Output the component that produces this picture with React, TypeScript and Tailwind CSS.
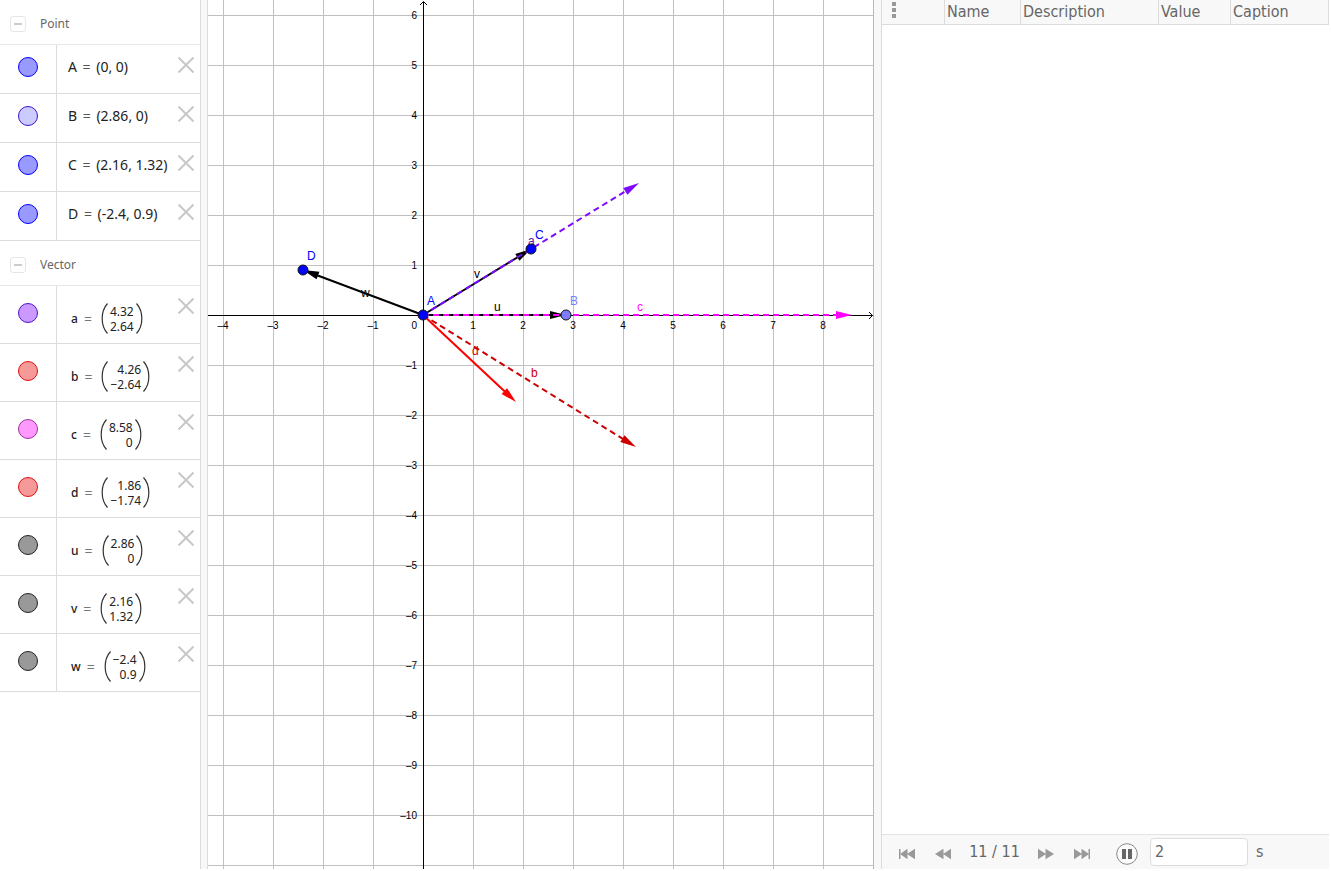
import type { ReactNode } from "react";

type PointItem = { name: string; value: string; fill: string; stroke: string };
type VectorItem = { name: string; top: string; bottom: string; fill: string; stroke: string };

const POINTS: PointItem[] = [
	{ name: "A", value: "(0, 0)", fill: "#9999ff", stroke: "#0000ff" },
	{ name: "B", value: "(2.86, 0)", fill: "#cbcbff", stroke: "#3a12cc" },
	{ name: "C", value: "(2.16, 1.32)", fill: "#9999ff", stroke: "#0000ff" },
	{ name: "D", value: "(-2.4, 0.9)", fill: "#9999ff", stroke: "#0000ff" },
];

const VECTORS: VectorItem[] = [
	{ name: "a", top: "4.32", bottom: "2.64", fill: "#cb99ff", stroke: "#4a18c8" },
	{ name: "b", top: "4.26", bottom: "−2.64", fill: "#f59999", stroke: "#dd1111" },
	{ name: "c", top: "8.58", bottom: "0", fill: "#ff99ff", stroke: "#99339f" },
	{ name: "d", top: "1.86", bottom: "−1.74", fill: "#f59999", stroke: "#dd1111" },
	{ name: "u", top: "2.86", bottom: "0", fill: "#999999", stroke: "#222222" },
	{ name: "v", top: "2.16", bottom: "1.32", fill: "#999999", stroke: "#222222" },
	{ name: "w", top: "−2.4", bottom: "0.9", fill: "#999999", stroke: "#222222" },
];

// graphics view: origin and scale in px
const ORIGIN_X = 215;
const ORIGIN_Y = 315;
const UNIT = 50;

const X_TICKS = [-4, -3, -2, -1, 1, 2, 3, 4, 5, 6, 7, 8];
const Y_TICKS = [6, 5, 4, 3, 2, 1, -1, -2, -3, -4, -5, -6, -7, -8, -9, -10];

const ARROWS = [
	{ id: "u", x: 2.86, y: 0, color: "#000000", dashed: false },
	{ id: "v", x: 2.16, y: 1.32, color: "#000000", dashed: false },
	{ id: "w", x: -2.4, y: 0.9, color: "#000000", dashed: false },
	{ id: "a", x: 4.32, y: 2.64, color: "#7d0aff", dashed: true },
	{ id: "b", x: 4.26, y: -2.64, color: "#cc0000", dashed: true },
	{ id: "c", x: 8.58, y: 0, color: "#ff00ff", dashed: true },
	{ id: "d", x: 1.86, y: -1.74, color: "#ff0000", dashed: false },
];

const DOTS = [
	{ id: "A", x: 0, y: 0, color: "#0000ff" },
	{ id: "B", x: 2.86, y: 0, color: "#7d7dff" },
	{ id: "C", x: 2.16, y: 1.32, color: "#0000ff" },
	{ id: "D", x: -2.4, y: 0.9, color: "#0000ff" },
];

const ARROW_LABELS = [
	{ text: "a", x: 105, y: -70, color: "#5a10a8" },
	{ text: "b", x: 108, y: 62, color: "#cc0000" },
	{ text: "c", x: 214, y: -4, color: "#ff00ff" },
	{ text: "d", x: 49, y: 40, color: "#cc0000" },
	{ text: "u", x: 71, y: -4, color: "#000000" },
	{ text: "v", x: 51, y: -37, color: "#000000" },
	{ text: "w", x: -62, y: -18, color: "#000000" },
];

function formatTick(n: number) {
	return n < 0 ? `–${-n}` : String(n);
}

function GroupHeader({ title }: { title: string }) {
	return (
		<div className="flex h-[45px] items-center gap-[14px] border-b border-[#e8e8e8] pt-1 pl-[10px]">
			<button
				type="button"
				aria-label={`Collapse ${title}`}
				className="flex h-4 w-4 items-center justify-center rounded-[3px] border border-[#e6e6e6]"
			>
				<span className="h-0.5 w-2 bg-[#cccccc]" />
			</button>
			<h2 className="font-['Noto_Sans',sans-serif] text-[12px] leading-4 text-[#666666]">{title}</h2>
		</div>
	);
}

function Marble({ name, fill, stroke }: { name: string; fill: string; stroke: string }) {
	return (
		<button type="button" aria-label={`Show or hide ${name}`} className="h-5 w-5">
			<svg width="20" height="20" viewBox="0 0 20 20">
				<circle cx="10" cy="10" r="9.5" fill={fill} stroke={stroke} />
			</svg>
		</button>
	);
}

function DeleteButton({ name }: { name: string }) {
	return (
		<button type="button" aria-label={`Delete ${name}`} className="mt-3 mr-[6px] h-4 w-4 shrink-0">
			<svg width="16" height="16" viewBox="0 0 16 16" stroke="#c8c8c8" strokeWidth="2">
				<path d="M.5 .5 15.5 15.5M15.5 .5 .5 15.5" />
			</svg>
		</button>
	);
}

function Row({ item, tall, children }: { item: PointItem | VectorItem; tall?: boolean; children: ReactNode }) {
	return (
		<li className={`flex border-b border-[#dcdcdc] ${tall ? "h-[58px]" : "h-[49px]"}`}>
			<div
				className={`flex w-[57px] shrink-0 justify-center border-r border-[#dcdcdc] ${tall ? "pt-[17px]" : "pt-3"}`}
			>
				<Marble name={item.name} fill={item.fill} stroke={item.stroke} />
			</div>
			<div className="min-w-0 flex-1">{children}</div>
			<DeleteButton name={item.name} />
		</li>
	);
}

function Paren({ right }: { right?: boolean }) {
	return (
		<svg width="7" height="31" viewBox="0 0 7 31" fill="none" stroke="#333333" strokeWidth="1.2">
			<path d={right ? "M.5 .5C7.6 8.5 7.6 22.5 .5 30.5" : "M6.5 .5C-.6 8.5 -.6 22.5 6.5 30.5"} />
		</svg>
	);
}

function AlgebraView() {
	return (
		<aside className="w-[201px] shrink-0 overflow-hidden border-r border-[#dcdcdc] bg-white">
			<GroupHeader title="Point" />
			<ul>
				{POINTS.map((p) => (
					<Row key={p.name} item={p}>
						<div className="pt-3 pl-[11px] font-['Noto_Sans',sans-serif] text-[14px] leading-5 whitespace-nowrap text-[#222222]">
							{p.name} <span className="mx-0.5 text-[#555555]">=</span> {p.value}
						</div>
					</Row>
				))}
			</ul>
			<GroupHeader title="Vector" />
			<ul>
				{VECTORS.map((v) => (
					<Row key={v.name} item={v} tall>
						<div className="flex items-center pt-[17px] pl-[14px] font-['Noto_Sans',sans-serif] text-[12px] text-[#222222]">
							<span className="font-medium">{v.name}</span>
							<span className="mr-[9px] ml-[6px] text-[14px] text-[#777777]">=</span>
							<Paren />
							<span className="mx-0.5 flex flex-col items-end leading-[15px]">
								<span>{v.top}</span>
								<span>{v.bottom}</span>
							</span>
							<Paren right />
						</div>
					</Row>
				))}
			</ul>
		</aside>
	);
}

function Arrow({ x, y, color, dashed }: { x: number; y: number; color: string; dashed: boolean }) {
	const px = x * UNIT;
	const py = -y * UNIT;
	const length = Math.hypot(px, py);
	const angle = (Math.atan2(py, px) * 180) / Math.PI;
	return (
		<g transform={`rotate(${angle})`}>
			<line x2={length - 15} stroke={color} strokeWidth="2" strokeDasharray={dashed ? "6 4" : undefined} />
			<path d={`M${length} 0l-16 -4v8z`} fill={color} />
		</g>
	);
}

function GraphicsView() {
	return (
		<main className="min-w-0 flex-1 overflow-hidden bg-white">
			<svg className="block h-full w-full font-['Liberation_Sans',Arial,sans-serif]" role="img" aria-label="Graphics view">
				<g stroke="#c0c0c0" shapeRendering="crispEdges">
					{X_TICKS.map((n) => (
						<line key={n} x1={ORIGIN_X + n * UNIT + 0.5} x2={ORIGIN_X + n * UNIT + 0.5} y1="0" y2="100%" />
					))}
					{[...Y_TICKS, -11].map((n) => (
						<line key={n} x1="0" x2="100%" y1={ORIGIN_Y - n * UNIT + 0.5} y2={ORIGIN_Y - n * UNIT + 0.5} />
					))}
				</g>

				{/* axes */}
				<g stroke="#000000" fill="none">
					<line x1="0" x2="100%" y1={ORIGIN_Y + 0.5} y2={ORIGIN_Y + 0.5} />
					<line x1={ORIGIN_X + 0.5} x2={ORIGIN_X + 0.5} y1="2" y2="100%" />
					<path d={`M${ORIGIN_X - 3} 5l3.5 -3.5l3.5 3.5`} />
					<svg x="100%" y={ORIGIN_Y} overflow="visible">
						<path d="M-4 -3l3.5 3.5l-3.5 3.5" />
					</svg>
				</g>

				<g transform={`translate(${ORIGIN_X} ${ORIGIN_Y})`}>
					<g fontSize="10" fill="#000000">
						{X_TICKS.map((n) => (
							<text key={n} x={n * UNIT} y="14" textAnchor="middle">
								{formatTick(n)}
							</text>
						))}
						{Y_TICKS.map((n) => (
							<text key={n} x="-6" y={-n * UNIT + 4} textAnchor="end">
								{formatTick(n)}
							</text>
						))}
						<text x="-6" y="14" textAnchor="end">
							0
						</text>
					</g>

					{ARROWS.map((a) => (
						<Arrow key={a.id} x={a.x} y={a.y} color={a.color} dashed={a.dashed} />
					))}
					<g fontSize="12">
						{ARROW_LABELS.map((l) => (
							<text key={l.text} x={l.x} y={l.y} fill={l.color}>
								{l.text}
							</text>
						))}
						{DOTS.map((d) => (
							<g key={d.id} transform={`translate(${d.x * UNIT} ${-d.y * UNIT})`}>
								<circle r="5" fill={d.color} stroke="#111111" />
								<text x="4" y="-10" fill={d.color}>
									{d.id}
								</text>
							</g>
						))}
					</g>
				</g>
			</svg>
		</main>
	);
}

function StepIcon({ forward, bar }: { forward?: boolean; bar?: boolean }) {
	return (
		<svg width="18" height="12" viewBox="0 0 18 12" fill="#999999">
			<g transform={forward ? "matrix(-1 0 0 1 18 0)" : undefined}>
				{bar && <path d="M1 1h1.5v10H1z" />}
				<path d={bar ? "M2 6 9.5 .8v10.4zM9 6l8 -5.2v10.4z" : "M1 6 9.5 .8v10.4zM9 6l8 -5.2v10.4z"} />
			</g>
		</svg>
	);
}

function NavigationBar() {
	return (
		<footer className="flex h-[35px] shrink-0 items-center border-t border-[#e4e4e4] bg-[#f8f8f8] pl-4 text-[16px] leading-5 text-[#666666]">
			<button type="button" aria-label="First step" className="mt-1">
				<StepIcon bar />
			</button>
			<button type="button" aria-label="Previous step" className="mt-1 ml-[18px]">
				<StepIcon />
			</button>
			<span className="w-[85px] text-center">11 / 11</span>
			<button type="button" aria-label="Next step" className="mt-1">
				<StepIcon forward />
			</button>
			<button type="button" aria-label="Last step" className="mt-1 ml-[18px]">
				<StepIcon forward bar />
			</button>
			<button type="button" aria-label="Pause" className="mt-1 ml-6">
				<svg width="24" height="24" viewBox="0 0 24 24">
					<circle cx="12" cy="12" r="10.3" fill="#fbfbfb" stroke="#8a8a8a" />
					<path d="M7 7h4v10H7zM13 7h4v10h-4z" fill="#666666" />
				</svg>
			</button>
			<input
				aria-label="Seconds per step"
				defaultValue="2"
				className="ml-[11px] h-7 w-[98px] rounded-[4px] border border-[#dcdcdc] bg-white px-1 pb-0.5 text-[16px] outline-none"
			/>
			<span className="ml-2">s</span>
		</footer>
	);
}

function ConstructionProtocol() {
	return (
		<section className="flex w-[447px] shrink-0 flex-col bg-white font-['DejaVu_Sans_Condensed','DejaVu_Sans',sans-serif]">
			<table className="w-full table-fixed border-separate border-spacing-0 text-[16px] leading-6 text-[#666666]">
				<colgroup>
					<col className="w-[63px]" />
					<col className="w-[76px]" />
					<col className="w-[138px]" />
					<col className="w-[72px]" />
					<col />
				</colgroup>
				<thead>
					<tr className="bg-[#f8f8f8] text-left [&>th]:h-[25px] [&>th]:border-r [&>th]:border-b [&>th]:border-[#dcdcdc] [&>th]:p-0 [&>th]:pl-0.5 [&>th]:align-top [&>th]:font-normal">
						<th>
							<button type="button" aria-label="Columns" className="ml-2 flex flex-col gap-0.5 pt-0.5">
								<span className="h-1 w-1 bg-[#999999]" />
								<span className="h-1 w-1 bg-[#999999]" />
								<span className="h-1 w-1 bg-[#999999]" />
							</button>
						</th>
						<th>Name</th>
						<th>Description</th>
						<th>Value</th>
						<th>Caption</th>
					</tr>
				</thead>
			</table>
			<div className="flex-1" />
			<NavigationBar />
		</section>
	);
}

export default function App() {
	return (
		<div className="flex h-screen overflow-hidden bg-white pr-0.5 pb-0.5">
			<AlgebraView />
			<div className="w-[7px] shrink-0 border-r border-[#dcdcdc] bg-[#f8f8f8]" />
			<GraphicsView />
			<div className="w-[9px] shrink-0 border-r border-l border-r-[#dcdcdc] border-l-[#b8b8b8] bg-[#f8f8f8]" />
			<ConstructionProtocol />
		</div>
	);
}
